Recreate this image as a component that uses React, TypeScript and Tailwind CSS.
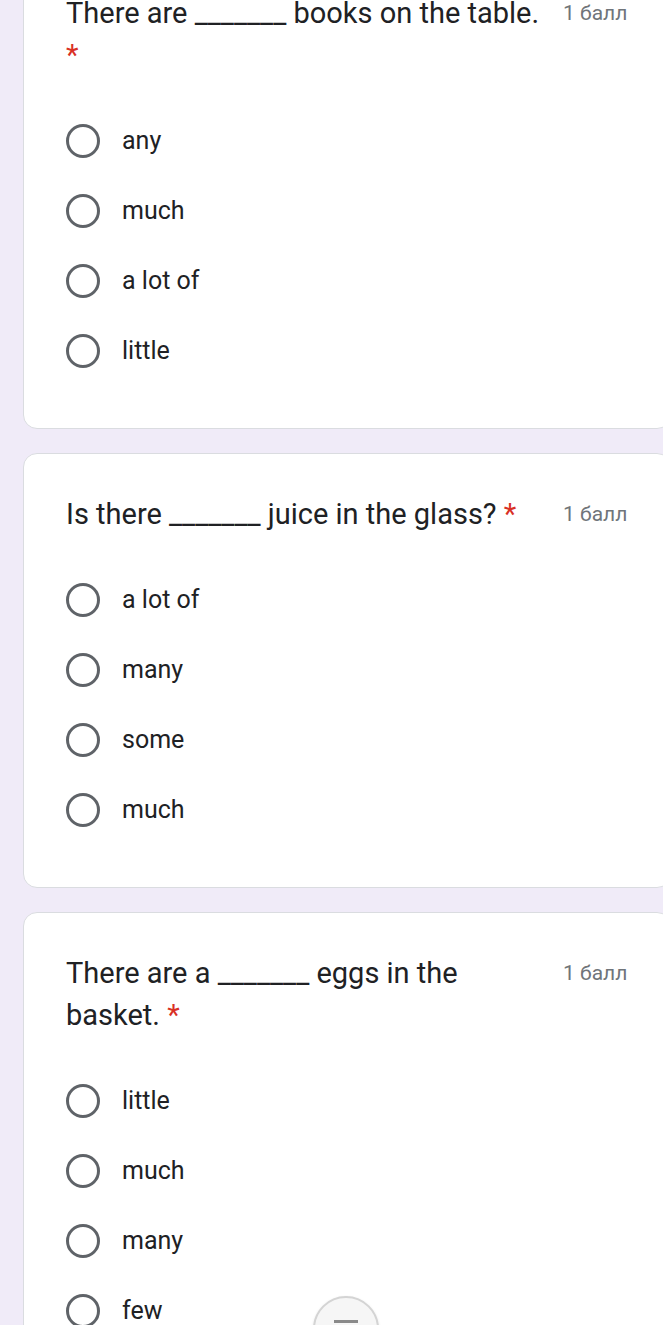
import React from "react";

type Question = {
  text: string;
  options: string[];
};

const questions: Question[] = [
  { text: "There are _______ books on the table.", options: ["any", "much", "a lot of", "little"] },
  { text: "Is there _______ juice in the glass?", options: ["a lot of", "many", "some", "much"] },
  { text: "There are a _______ eggs in the basket.", options: ["little", "much", "many", "few"] },
];

function QuestionCard({ q }: { q: Question }) {
  return (
    <div className="w-[648px] shrink-0 bg-white border border-[#dadce0] rounded-[14px] pt-[39px] pb-[42px] pl-[42px] pr-[43px]">
      <div className="flex items-start">
        <div className="w-[479px] shrink-0 text-[29px] leading-[42px] text-[#202124]">
          {q.text} <span className="text-[#d93025]">*</span>
        </div>
        <div className="ml-[18px] shrink-0 text-[21px] leading-[42px] text-[#70757a]">1 балл</div>
      </div>

      <div className="mt-[30px] flex flex-col">
        {q.options.map((opt) => (
          <label key={opt} className="h-[70px] flex items-center gap-[22px]">
            <span className="w-[34px] h-[34px] rounded-full border-[3.5px] border-[#5f6368] shrink-0" />
            <span className="text-[25px] text-[#202124]">{opt}</span>
          </label>
        ))}
      </div>
    </div>
  );
}

export default function App() {
  return (
    <div className="relative w-[663px] h-[1325px] overflow-hidden bg-[#f0ebf8] font-['Roboto',sans-serif]">
      <div className="-mt-[48px] pl-[23px] flex flex-col gap-[24px]">
        {questions.map((q, i) => (
          <QuestionCard key={i} q={q} />
        ))}
      </div>

      {/* floating scroll button, cut off by the bottom edge */}
      <div className="absolute left-[313px] top-[1296px] w-[66px] h-[66px] rounded-full bg-[#f6f6f6] border-2 border-[#d4d4d4] shadow-sm flex flex-col items-center pt-[22px]">
        <span className="w-[24px] h-[3px] bg-[#8a8a8a]" />
        <span className="w-[3px] h-[6px] bg-[#8a8a8a] mt-[2px]" />
      </div>
    </div>
  );
}
